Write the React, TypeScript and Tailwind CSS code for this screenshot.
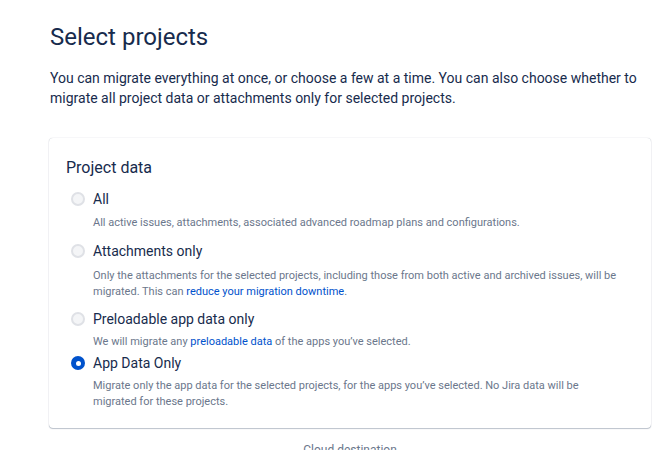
import { useState } from 'react';

type Option = {
  id: string;
  label: string;
  description: React.ReactNode;
  gapClass: string;
  descClass: string;
};

const options: Option[] = [
  {
    id: 'all',
    label: 'All',
    description: 'All active issues, attachments, associated advanced roadmap plans and configurations.',
    gapClass: 'mt-[11px]',
    descClass: 'mt-[6px]',
  },
  {
    id: 'attachments',
    label: 'Attachments only',
    description: (
      <>
        Only the attachments for the selected projects, including those from both active and archived issues, will be
        migrated. This can <a className="text-[#0052CC]">reduce your migration downtime</a>.
      </>
    ),
    gapClass: 'mt-[10px]',
    descClass: 'mt-[7px]',
  },
  {
    id: 'preloadable',
    label: 'Preloadable app data only',
    description: (
      <>
        We will migrate any <a className="text-[#0052CC]">preloadable data</a> of the apps you’ve selected.
      </>
    ),
    gapClass: 'mt-[9px]',
    descClass: 'mt-[5px]',
  },
  {
    id: 'app',
    label: 'App Data Only',
    description: 'Migrate only the app data for the selected projects, for the apps you’ve selected. No Jira data will be migrated for these projects.',
    gapClass: 'mt-[3px]',
    descClass: 'mt-[5px]',
  },
];

function Radio({ checked }: { checked: boolean }) {
  return checked ? (
    <span className="flex h-[14px] w-[14px] shrink-0 items-center justify-center rounded-full bg-[#0052CC]">
      <span className="h-[5px] w-[5px] rounded-full bg-white" />
    </span>
  ) : (
    <span className="h-[14px] w-[14px] shrink-0 rounded-full border-2 border-[#DFE1E6] bg-[#F4F5F7]" />
  );
}

export default function App() {
  const [selected, setSelected] = useState('app');

  return (
    <div className="min-h-screen bg-white pl-[49px] pt-[23px] text-[#172B4D]" style={{ fontFamily: 'Roboto, sans-serif' }}>
      <div className="w-[602px]">
        <h1 className="pl-[1px] text-[24px] leading-[28px] font-normal">Select projects</h1>
        <p className="mt-[17px] pl-[1px] text-[14px] leading-[20px]">
          You can migrate everything at once, or choose a few at a time. You can also choose whether to migrate all
          project data or attachments only for selected projects.
        </p>

        <div className="mt-[30px] rounded-[4px] bg-white px-[17px] pt-[20px] pb-[18px] shadow-[0_1px_1px_rgba(9,30,66,0.25),0_0_1px_rgba(9,30,66,0.31)]">
          <h2 className="text-[16px] leading-[20px] font-normal">Project data</h2>
          {options.map((o) => (
            <div key={o.id} className={o.gapClass}>
              <label className="flex cursor-pointer items-center gap-[8px] pl-[5px]" onClick={() => setSelected(o.id)}>
                <Radio checked={selected === o.id} />
                <span className="text-[14px] leading-[20px]">{o.label}</span>
              </label>
              <p className={`${o.descClass} pl-[27px] pr-[14px] text-[11px] leading-[16px] text-[#6B778C]`}>{o.description}</p>
            </div>
          ))}
        </div>

        <div className="mt-[14px] text-center text-[12px] leading-[16px] text-[#6B778C]">Cloud destination</div>
      </div>
    </div>
  );
}
